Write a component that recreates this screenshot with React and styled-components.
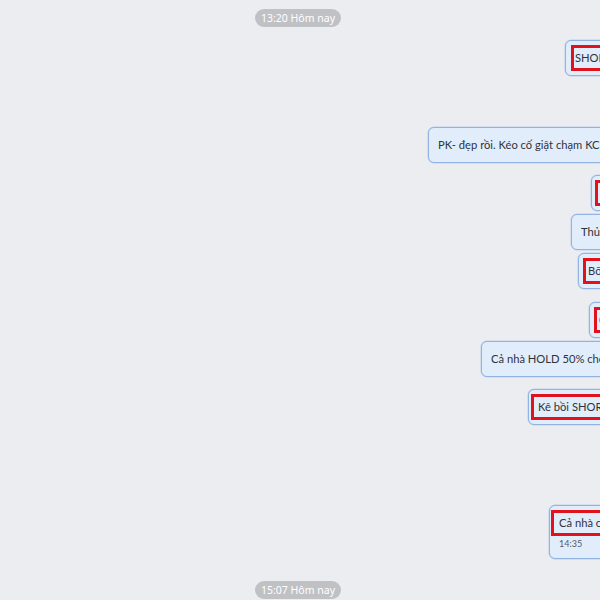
import React from "react";
import styled, { createGlobalStyle } from "styled-components";

const Global = createGlobalStyle`
  html, body { margin: 0; padding: 0; background: #ebedf0; overflow: hidden; }
  * { box-sizing: border-box; }
`;

const Page = styled.div`
  width: 600px;
  height: 600px;
  overflow: hidden;
  background: #ebedf0;
  padding-top: 9px;
  display: flex;
  flex-direction: column;
  font-family: "Lato", "Noto Sans", sans-serif;
`;

const PillRow = styled.div`
  display: flex;
  justify-content: center;
  margin-top: ${(p) => p.$mt || 0}px;
  padding-left: 84px;
  padding-right: 88px;
`;

const Pill = styled.div`
  height: 18px;
  width: 86px;
  border-radius: 9px;
  background: #bfc1c5;
  color: #fff;
  font-family: "Noto Sans", sans-serif;
  font-size: 10.5px;
  line-height: 18px;
  text-align: center;
`;

const Row = styled.div`
  display: flex;
  justify-content: flex-end;
  margin-right: -100px;
  margin-top: ${(p) => p.$mt}px;
`;

const Bubble = styled.div`
  width: ${(p) => p.$w}px;
  flex: none;
  background: #e2edfc;
  border: 1px solid #93b3e2;
  border-radius: 6px;
  padding: 7px 9px 7px;
  color: #2f3338;
  font-size: 11.2px;
  white-space: nowrap;
  overflow: hidden;
  box-shadow: 0 0 0 0.5px rgba(147, 179, 226, 0.5);
`;

const Text = styled.div`
  line-height: 20px;
  height: 20px;
  ${(p) =>
    p.$marked &&
    `
    margin: -3px -${p.$mx ?? 4}px;
    padding: 0 ${(p.$mx ?? 4) - 3}px;
    border: 3px solid #e0121c;
    height: 26px;
    line-height: 20px;
  `}
`;

const Time = styled.div`
  margin-top: 4px;
  font-size: 9px;
  line-height: 14px;
  color: #555a60;
`;

const messages = [
  { mt: 13, w: 135, text: "SHORT tiếp cả nhà", marked: true, mx: 4 },
  { mt: 51, w: 272, text: "PK- đẹp rồi. Kéo cố giật chạm KC cả nhà nhé" },
  { mt: 12, w: 109, text: "Hold", marked: true, mx: 6 },
  { mt: 3, w: 129, text: "Thủ cắt lỗ nhé" },
  { mt: 3, w: 122, text: "Bỡ rồi", marked: true, mx: 5 },
  { mt: 13, w: 111, text: "Chốt", marked: true, mx: 5 },
  { mt: 3, w: 219, text: "Cả nhà HOLD 50% chốt lời nhé" },
  { mt: 12, w: 172, text: "Kê bồi SHORT nhé", marked: true, mx: 7 },
  { mt: 80, w: 151, text: "Cả nhà chốt nhé", marked: true, mx: 8, time: "14:35" },
];

export default function App() {
  return (
    <>
      <Global />
      <Page>
        <PillRow>
          <Pill>13:20 Hôm nay</Pill>
        </PillRow>
        {messages.map((m, i) => (
          <Row key={i} $mt={m.mt}>
            <Bubble $w={m.w}>
              <Text $marked={m.marked} $mx={m.mx}>
                {m.text}
              </Text>
              {m.time && <Time>{m.time}</Time>}
            </Bubble>
          </Row>
        ))}
        <PillRow $mt={22}>
          <Pill>15:07 Hôm nay</Pill>
        </PillRow>
      </Page>
    </>
  );
}
